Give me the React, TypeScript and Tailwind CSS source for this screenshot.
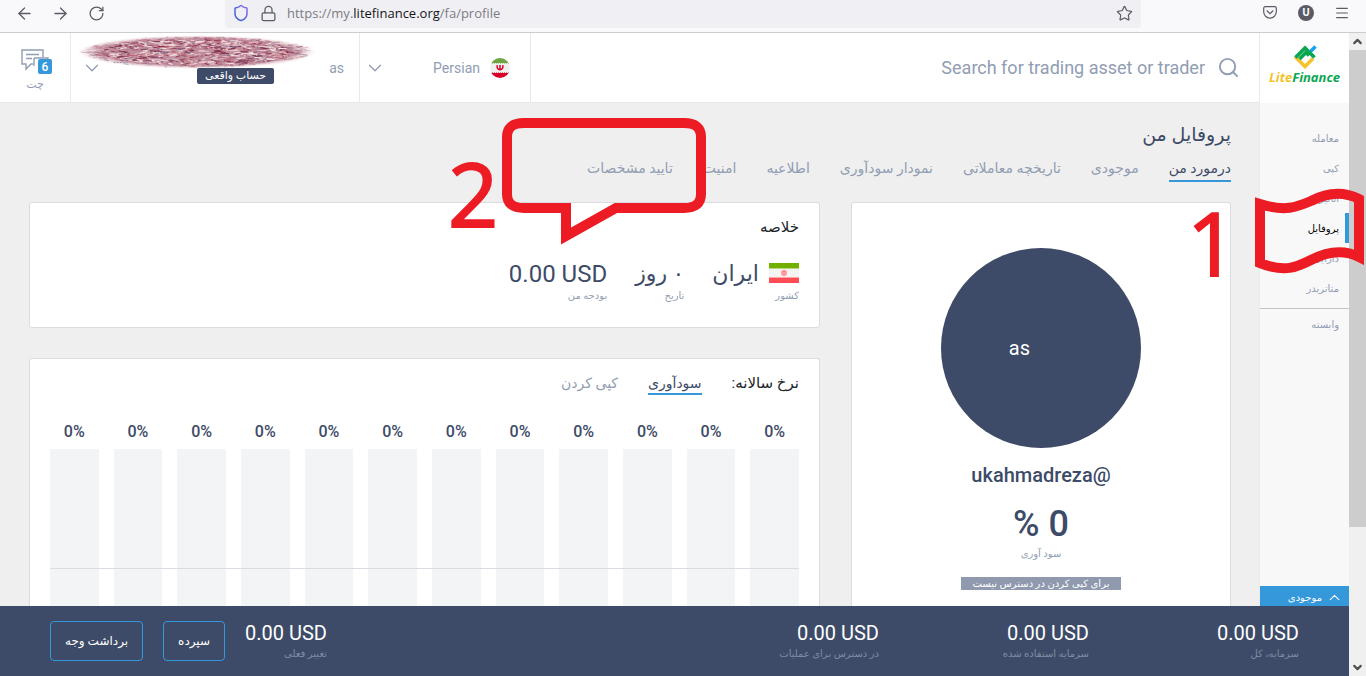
import type { ReactNode } from 'react'
import { ArrowLeft, ArrowRight, ChevronDown, ChevronUp, Lock, Menu, RotateCw, Search, Shield, Star } from 'lucide-react'
import clsx from 'clsx'

const PROFILE_TABS = [
  'درمورد من',
  'موجودی',
  'تاریخچه معاملاتی',
  'نمودار سودآوری',
  'اطلاعیه',
  'امنیت',
  'تایید مشخصات',
]

const NAV_ITEMS = ['معامله', 'کپی', 'آنالیز', 'پروفایل', 'دارایی', 'متاتریدر']

const BALANCES = [
  { label: 'سرمایه، کل', value: '0.00 USD' },
  { label: 'سرمایه استفاده شده', value: '0.00 USD' },
  { label: 'در دسترس برای عملیات', value: '0.00 USD' },
]

const MONTHS = Array.from({ length: 12 }, (_, i) => ({ id: i, value: 0 }))

// short strokes scattered inside the ellipse that hides the account name
const STROKE_COLORS = ['#8a2442', '#c98b97', '#f5e4e6', '#6f3350', '#b3566a', '#e3c4cb', '#9d7f9c', '#fff6f6']

function noise(n: number) {
  const v = Math.sin(n * 127.1 + 11.7) * 43758.5453
  return v - Math.floor(v)
}

const STROKES = Array.from({ length: 1100 }, (_, i) => {
  const a = noise(i) * Math.PI * 2
  const r = Math.sqrt(noise(i + 2000))
  return {
    x: 118 + Math.cos(a) * r * 110,
    y: 17 + Math.sin(a) * r * 15,
    w: 2 + noise(i + 4000) * 7,
    dy: noise(i + 6000) * 3 - 1.5,
    color: STROKE_COLORS[Math.floor(noise(i + 8000) * STROKE_COLORS.length)],
    opacity: r > 0.85 ? 0.3 : 0.8,
  }
})

function Scribble() {
  return (
    <svg width="240" height="34" viewBox="0 0 236 34" preserveAspectRatio="none" aria-hidden="true">
      <defs>
        <radialGradient id="smudge">
          <stop offset="0.8" stopColor="#c08c9a" />
          <stop offset="1" stopColor="#f3dfe2" stopOpacity="0" />
        </radialGradient>
      </defs>
      <ellipse cx="118" cy="17" rx="118" ry="17" fill="url(#smudge)" />
      {STROKES.map((s, i) => (
        <path key={i} d={`M${s.x - s.w / 2} ${s.y}l${s.w} ${s.dy}`} stroke={s.color} strokeOpacity={s.opacity} />
      ))}
      <path d="M36 27.500h14" stroke="#9a9fb4" strokeDasharray="2 1" />
    </svg>
  )
}

function BrowserBar() {
  return (
    <div className="flex h-[33px] shrink-0 items-start border-b border-[#cccccc] bg-[#f9f9fb] text-[#5b5b66]">
      <div className="flex h-[26px] w-[225px] shrink-0 items-center gap-4 pl-3.5">
        <button aria-label="Back" className="flex w-5 justify-center"><ArrowLeft size={19} strokeWidth={1.6} /></button>
        <button aria-label="Forward" className="flex w-5 justify-center"><ArrowRight size={19} strokeWidth={1.6} /></button>
        <button aria-label="Reload" className="flex w-5 justify-center"><RotateCw size={17} strokeWidth={1.8} /></button>
      </div>
      <div className="flex h-7 flex-1 items-center rounded-b bg-[#f0f0f4] pr-2 pb-0.5 pl-[7px]">
        <svg width="0" height="0" aria-hidden="true">
          <linearGradient id="shield" x1="0" y1="1" x2="1" y2="0">
            <stop offset="0" stopColor="#2f5fd0" />
            <stop offset="1" stopColor="#8f6cf0" />
          </linearGradient>
        </svg>
        <Shield size={18} strokeWidth={2} stroke="url(#shield)" />
        <Lock size={17} strokeWidth={1.8} className="ml-2.5" />
        <div
          role="textbox"
          aria-label="Address"
          className="ml-2.5 flex-1 font-['Open_Sans',sans-serif] text-[13px] leading-5 text-[#7c7c84]"
        >
          https://my.<span className="text-[#15141a]">litefinance.org</span>/fa/profile
        </div>
        <button aria-label="Bookmark"><Star size={17} strokeWidth={1.7} /></button>
      </div>
      <div className="flex h-[25px] w-[225px] shrink-0 items-center justify-end gap-4 pr-3.5">
        <button aria-label="Pocket" className="flex w-5 justify-center">
          <svg width="14" height="13" viewBox="0 0 14 13" fill="none" stroke="currentColor" strokeWidth="1.200">
            <path d="M2.200.7h9.600a1.500 1.500 0 0 1 1.500 1.500V5.800a6.300 6.300 0 0 1-12.600 0V2.200A1.500 1.500 0 0 1 2.200.7Z" />
            <path d="m4 4.800 3 2.800 3-2.800" strokeLinecap="round" />
          </svg>
        </button>
        <button aria-label="Account" className="flex w-5 justify-center">
          <span className="flex size-4 items-center justify-center rounded-full bg-[#5b5b66] font-['Open_Sans',sans-serif] text-[10px] font-bold text-white">U</span>
        </button>
        <button aria-label="Menu" className="flex w-5 justify-center"><Menu size={16} strokeWidth={1.800} /></button>
      </div>
    </div>
  )
}

function ChatIcon() {
  return (
    <svg width="28" height="22" viewBox="0 0 28 22" fill="none" stroke="#919db3" strokeWidth="1.4">
      <path d="M22 8V1H1v14h4v5l5-5h2" />
      <path d="M13 9h14v9M13 9v8" />
      <path d="M5 5.500h13M5 9.500h6" />
    </svg>
  )
}

function RoundFlag() {
  return (
    <svg width="20" height="20" viewBox="0 0 20 20" aria-hidden="true">
      <clipPath id="round"><circle cx="10" cy="10" r="10" /></clipPath>
      <g clipPath="url(#round)">
        <path fill="#f0f0f0" d="M0 0h20v20H0z" />
        <path fill="#6da544" d="M0 0h20v5.500H0z" />
        <path fill="#d80027" d="M0 14.500h20V20H0z" />
        <path stroke="#f0f0f0" strokeDasharray="1 1" d="M1 5.500h18M1 14.500h18" />
        <path fill="none" stroke="#d80027" strokeWidth="1.500" d="M7.200 7.200c-.5 2.600.4 4.300 2.800 4.600 2.400-.3 3.300-2 2.800-4.600M10 7v5" />
      </g>
    </svg>
  )
}

function IranFlag() {
  return (
    <svg width="30" height="20" viewBox="0 0 30 20" aria-hidden="true">
      <path fill="#f3f3f3" d="M0 0h30v20H0z" />
      <path fill="#73af00" d="M0 0h30v5H0z" />
      <path fill="#ff4b55" d="M0 15h30v5H0z" />
      <path stroke="#b9d780" d="M0 5.500h30" />
      <path stroke="#ffa5aa" d="M0 14.500h30" />
      <circle cx="15" cy="10" r="2.300" fill="#ffc4c7" stroke="#ff9095" strokeWidth="1.400" />
      <path stroke="#ff6b73" d="M15 7.500v4" />
    </svg>
  )
}

function Logo() {
  return (
    <a href="#" className="flex h-[70px] flex-col items-center bg-white pt-3">
      <svg width="24" height="24" viewBox="0 0 24 24" fill="none" strokeWidth="3.600" aria-hidden="true">
        <path stroke="#f5c32c" d="M2 11.500 12 21.500l8-8" />
        <path stroke="#12a5f4" d="m17.500 6.500 5-5" />
        <path stroke="#0ba651" d="M2.500 12.500 12 3l9.500 9.500M6.500 14l6.500-6.500 3 3" />
      </svg>
      <span className="font-['Open_Sans',sans-serif] text-[13px] leading-4 font-bold text-[#0ba651] italic">
        <span className="text-[#f5c32c]">Lite</span>Finance
      </span>
    </a>
  )
}

function Header() {
  return (
    <header dir="ltr" className="flex h-[70px] shrink-0 border-b border-[#e8e8e8] bg-white text-[#919db3]">
      <button className="flex w-[71px] flex-col items-center border-r border-[#eaeaea] pt-4">
        <span className="relative">
          <ChatIcon />
          <span className="absolute top-2.5 left-[17px] flex h-[15px] w-[14px] items-center justify-center rounded-xs bg-[#3498db] text-xs font-medium text-white">6</span>
        </span>
        <span className="mt-1 text-[11px] leading-5">چت</span>
      </button>
      <div className="relative flex w-[289px] items-center justify-between border-r border-[#eaeaea] pr-[15px] pl-2.5">
        <ChevronDown size={22} strokeWidth={1.400} />
        <span className="text-sm">as</span>
        <span className="absolute top-0.5 left-1.5"><Scribble /></span>
        <span className="absolute top-[35px] left-[126px] rounded-xs bg-[#3d4b68] px-2 text-[11px] leading-4 text-white">حساب واقعی</span>
      </div>
      <button className="flex w-[171px] items-center border-r border-[#eaeaea] pr-5 pl-1">
        <ChevronDown size={22} strokeWidth={1.400} />
        <span className="mr-2.5 ml-auto text-sm">Persian</span>
        <RoundFlag />
      </button>
      <div className="flex flex-1 items-center justify-end pr-[19px]">
        <input
          aria-label="Search"
          placeholder="Search for trading asset or trader"
          className="w-[300px] text-right text-lg outline-none placeholder:text-[#919db3]"
        />
        <Search size={23} strokeWidth={2} className="ml-3" />
      </div>
    </header>
  )
}

function Card({ className, children }: { className?: string; children: ReactNode }) {
  return <section className={clsx('rounded-[3px] border border-[#dadce2] bg-white', className)}>{children}</section>
}

function ProfileCard() {
  return (
    <Card className="flex w-[380px] shrink-0 flex-col items-center rounded-b-none border-b-0 pt-[45px]">
      <div className="flex size-[200px] items-center rounded-full bg-[#3d4b68] pr-[111px] text-xl text-white">as</div>
      <h2 className="mt-3 text-xl leading-[30px] font-medium">@ukahmadreza</h2>
      <p className="mt-3 text-4xl leading-[44px] font-medium">0 %</p>
      <p className="text-[10px] leading-4 text-[#919db3]">سود آوری</p>
      <p className="mt-[15px] bg-[#8f9aaf] px-3 text-[10px] leading-[13px] text-white">برای کپی کردن در دسترس نیست</p>
    </Card>
  )
}

function SummaryItem({ label, children }: { label: string; children: ReactNode }) {
  return (
    <div>
      <div className="flex h-8 items-center gap-2.5 text-[22px]">{children}</div>
      <p className="text-[10px] leading-[14px] text-[#919db3]">{label}</p>
    </div>
  )
}

function Summary() {
  return (
    <Card className="h-[126px] px-5 pt-3">
      <h2 className="text-[15px] leading-6 text-[#212529]">خلاصه</h2>
      <div className="mt-[18px] flex gap-7">
        <SummaryItem label="کشور"><IranFlag />ایران</SummaryItem>
        <SummaryItem label="تاریخ">۰ روز</SummaryItem>
        <SummaryItem label="بودجه من"><span dir="ltr" className="pt-0.5 text-2xl">0.00 USD</span></SummaryItem>
      </div>
    </Card>
  )
}

function YearlyRate() {
  return (
    <Card className="flex min-h-0 flex-1 flex-col overflow-hidden rounded-b-none border-b-0 px-5 pt-3">
      <div className="flex gap-[30px] text-sm leading-6">
        <h2 className="text-[15px] text-[#212529]">نرخ سالانه:</h2>
        <button className="h-6 border-b-2 border-[#3498db]">سودآوری</button>
        <button className="h-6 text-[#919db3]">کپی کردن</button>
      </div>
      <div className="relative mt-[25px] flex flex-1 gap-[15px]">
        {MONTHS.map((month) => (
          <div key={month.id} className="flex flex-1 flex-col text-center">
            <span dir="ltr" className="text-base leading-6 font-medium">{month.value}%</span>
            <div className="mt-[5px] flex-1 bg-[#f3f4f6]" />
          </div>
        ))}
        <div className="absolute inset-x-0 top-[148px] h-px bg-[#d9dce2]" />
      </div>
    </Card>
  )
}

function Sidebar() {
  return (
    <aside className="flex w-[90px] shrink-0 flex-col border-l border-[#eaeaea] bg-[#f8f8f8] text-[10px] text-[#919db3]">
      <Logo />
      <nav className="flex flex-col pt-5">
        {NAV_ITEMS.map((item) => (
          <a
            key={item}
            href="#"
            className={clsx(
              'flex h-[30px] items-center border-r-4 pr-1.5',
              item === 'پروفایل' ? 'border-[#3498db] text-black' : 'border-transparent',
            )}
          >
            {item}
          </a>
        ))}
        <a href="#" className="mt-[5px] flex h-8 items-center border-t border-[#c4c4c4] pr-2.5">وابسته</a>
      </nav>
      <button className="mt-auto flex h-5 items-center gap-1 bg-[#3498db] pt-0.5 pr-1.5 text-[10px] text-white">
        <ChevronUp size={17} strokeWidth={1.500} />
        موجودی
      </button>
    </aside>
  )
}

function Balance({ label, value }: { label: string; value: string }) {
  return (
    <div className="pt-0.5">
      <p dir="ltr" className="text-xl leading-6 text-white">{value}</p>
      <p className="text-[10px] leading-[18px] text-[#7f8ba3]">{label}</p>
    </div>
  )
}

function BalanceBar() {
  return (
    <footer className="flex h-[70px] shrink-0 items-center bg-[#3d4b68] px-[50px]">
      <div className="flex gap-32">
        {BALANCES.map((b) => (
          <div key={b.label} className="w-[82px] whitespace-nowrap"><Balance {...b} /></div>
        ))}
      </div>
      <div className="mr-auto flex items-center gap-5">
        <Balance label="تغییر فعلی" value="0.00 USD" />
        <button className="h-10 rounded border border-[#3498db] px-3.5 text-xs text-white">سپرده</button>
        <button className="h-10 rounded border border-[#3498db] px-3.5 text-xs text-white">برداشت وجه</button>
      </div>
    </footer>
  )
}

function ScrollBar() {
  return (
    <div className="flex w-[17px] shrink-0 flex-col items-center bg-[#f0f0f0] text-[#505050]">
      <ChevronUp size={13} strokeWidth={4} className="my-0.5 shrink-0" />
      <div className="h-[477px] w-full bg-[#cdcdcd]" />
      <ChevronDown size={13} strokeWidth={4} className="mt-auto mb-0.5 shrink-0" />
    </div>
  )
}

// red callouts drawn over the page
function Callouts() {
  return (
    <div dir="ltr" className="pointer-events-none absolute inset-0 font-['Open_Sans',sans-serif] text-[88px] leading-[90px] text-[#ed1c24] [-webkit-text-stroke:2px_#ed1c24]">
      <svg className="absolute top-0 left-0" width="1366" height="300" viewBox="0 0 1366 300" fill="none" stroke="#ed1c24" strokeWidth="10">
        <path d="M524 123H684Q701 123 701 137V194Q701 208 684 208H616L566 236V208H524Q507 208 507 194V137Q507 123 524 123Z" />
        <path d="M1260 204C1285 212 1297 207 1311 201C1330 191 1345 192 1359 199V257C1345 250 1330 250 1311 260C1297 267 1285 273 1260 263Z" />
      </svg>
      <span className="absolute top-[148px] left-[448px]">2</span>
      <span className="absolute top-[197px] left-[1187px]">1</span>
    </div>
  )
}

export default function App() {
  return (
    <div className="relative flex h-screen flex-col overflow-hidden font-['Roboto','DejaVu_Sans',sans-serif] text-[#3d4b68]">
      <BrowserBar />
      <div className="flex min-h-0 flex-1">
        <div dir="rtl" className="flex min-w-0 flex-1 flex-col">
          <div className="flex min-h-0 flex-1">
            <Sidebar />
            <div className="flex min-w-0 flex-1 flex-col">
              <Header />
              <main className="flex min-h-0 flex-1 flex-col bg-[#efefef] pt-[17px] pr-7 pl-[29px]">
                <h1 className="text-[19px] leading-[30px]">پروفایل من</h1>
                <nav className="mt-1.5 flex gap-[30px] text-sm leading-6">
                  {PROFILE_TABS.map((tab, i) => (
                    <a key={tab} href="#" className={clsx('h-[26px]', i === 0 ? 'border-b-2 border-[#3498db]' : 'text-[#919db3]')}>
                      {tab}
                    </a>
                  ))}
                </nav>
                <div className="mt-5 flex min-h-0 flex-1 gap-[31px] overflow-hidden">
                  <ProfileCard />
                  <div className="flex min-w-0 flex-1 flex-col gap-[30px]">
                    <Summary />
                    <YearlyRate />
                  </div>
                </div>
              </main>
            </div>
          </div>
          <BalanceBar />
        </div>
        <ScrollBar />
      </div>
      <Callouts />
    </div>
  )
}
